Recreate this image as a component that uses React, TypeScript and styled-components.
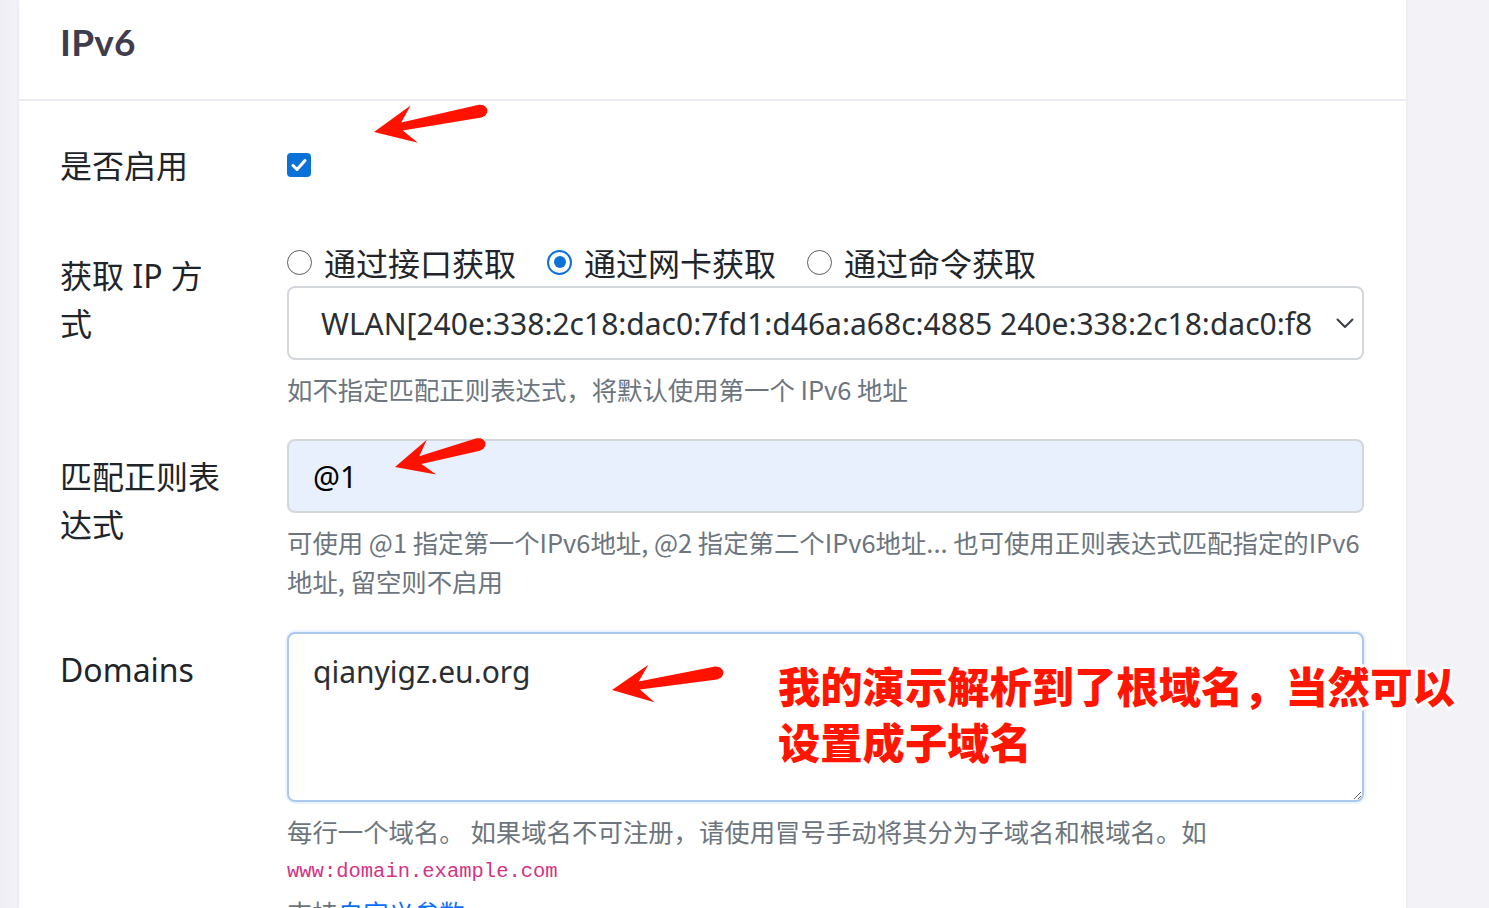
import React from "react";
import styled, { createGlobalStyle } from "styled-components";

const GlobalStyle = createGlobalStyle`
  html, body {
    margin: 0;
    padding: 0;
    background: #f0f0f5;
    overflow: hidden;
  }
  body {
    font-family: "Noto Sans", "Noto Sans CJK SC", sans-serif;
    color: #212529;
  }
`;

const Page = styled.div`
  position: relative;
  width: 1489px;
  height: 908px;
  overflow: hidden;
  background: linear-gradient(90deg, #eeeef4 0px, #f2f2f7 19px);
`;

const Card = styled.div`
  margin-left: 19px;
  width: 1387px;
  min-height: 908px;
  background: #ffffff;
  box-shadow: 0 0 4px rgba(60, 60, 90, 0.06);
`;

const CardHeader = styled.div`
  box-sizing: border-box;
  height: 101px;
  padding-left: 41px;
  display: flex;
  align-items: center;
  border-bottom: 2px solid #ebebf1;
`;

const Title = styled.h1`
  margin: 0 0 16px 0;
  font-family: Lato, "Noto Sans", sans-serif;
  font-weight: 700;
  font-size: 37px;
  color: #3f3d4d;
  letter-spacing: 0.2px;
`;

const CardBody = styled.div`
  padding: 27px 42px 0 41px;
`;

const Row = styled.div<{ $gap?: number }>`
  display: grid;
  grid-template-columns: 227px 1077px;
  margin-bottom: ${(p) => p.$gap ?? 30}px;
`;

const Label = styled.div`
  font-size: 32px;
  line-height: 48px;
  padding-top: 14px;
  max-width: 164px;
  color: #212529;
`;

const Control = styled.div<{ $top?: number }>`
  padding-top: ${(p) => p.$top ?? 0}px;
  display: flex;
  flex-direction: column;
  min-width: 0;
`;

const CheckBox = styled.span`
  width: 24px;
  height: 24px;
  border-radius: 4px;
  background: #0d72d8;
  display: flex;
  align-items: center;
  justify-content: center;
`;

const RadioGroup = styled.div`
  display: flex;
  align-items: center;
  height: 48px;
  gap: 31px;
`;

const RadioItem = styled.label`
  display: flex;
  align-items: center;
  gap: 12px;
  font-size: 32px;
  line-height: 48px;
  color: #212529;
  font-family: "Noto Sans CJK SC", sans-serif;
`;

const RadioDot = styled.span<{ $checked?: boolean }>`
  box-sizing: border-box;
  width: 25px;
  height: 25px;
  border-radius: 50%;
  border: ${(p) => (p.$checked ? "2.5px solid #0d72d8" : "1.5px solid #5c5c5c")};
  background: #fff;
  display: flex;
  align-items: center;
  justify-content: center;
  &::after {
    content: "";
    display: ${(p) => (p.$checked ? "block" : "none")};
    width: 12px;
    height: 12px;
    border-radius: 50%;
    background: #0d72d8;
  }
`;

const Select = styled.div`
  box-sizing: border-box;
  height: 74px;
  border: 2px solid #d3d6db;
  border-radius: 8px;
  display: flex;
  align-items: center;
  padding: 0 8px 0 32px;
  background: #fff;
`;

const SelectText = styled.span`
  flex: 1;
  white-space: nowrap;
  overflow: hidden;
  font-size: 30px;
  color: #2b2f33;
  margin-right: 20px;
`;

const Input = styled.div`
  box-sizing: border-box;
  height: 74px;
  border: 2px solid #d3d6db;
  border-radius: 8px;
  background: #e8f0fe;
  display: flex;
  align-items: center;
  padding: 0 24px;
  font-size: 30px;
  color: #000;
`;

const TextArea = styled.textarea`
  box-sizing: border-box;
  height: 170px;
  width: 100%;
  border: 2px solid #a9c9f0;
  border-radius: 8px;
  box-shadow: 0 0 0 2px rgba(13, 110, 253, 0.08);
  padding: 14px 24px;
  font-family: "Noto Sans", "Noto Sans CJK SC", sans-serif;
  font-size: 30px;
  line-height: 48px;
  color: #2b2f33;
  outline: none;
  resize: vertical;
  margin: 0;
  display: block;
`;

const Help = styled.div<{ $top?: number }>`
  margin-top: ${(p) => p.$top ?? 0}px;
  font-family: "Noto Sans CJK SC", sans-serif;
  font-size: 25.4px;
  line-height: 39px;
  color: #6c757d;
  white-space: nowrap;
`;

const Code = styled.code`
  display: block;
  font-family: "Liberation Mono", "DejaVu Sans Mono", monospace;
  font-size: 20.5px;
  line-height: 42px;
  color: #d63384;
`;

const Link = styled.span`
  color: #0d6efd;
`;

const Note = styled.div`
  position: absolute;
  left: 778px;
  top: 657px;
  font-family: "Noto Sans CJK SC", sans-serif;
  font-weight: 900;
  font-size: 42.3px;
  line-height: 56px;
  color: #ff1500;
  white-space: nowrap;
  -webkit-text-stroke: 5px #ffffff;
  paint-order: stroke fill;
`;

const Overlay = styled.svg`
  position: absolute;
  left: 0;
  top: 0;
  pointer-events: none;
`;

type P = [number, number];

function arrowPoints(tip: P, tail: P, headLen: number, headHalf: number): string {
  const dx = tail[0] - tip[0];
  const dy = tail[1] - tip[1];
  const len = Math.hypot(dx, dy);
  const ux = dx / len;
  const uy = dy / len;
  const nx = -uy;
  const ny = ux;
  const at = (d: number, w: number): P => [tip[0] + ux * d + nx * w, tip[1] + uy * d + ny * w];
  const pts: P[] = [
    tip,
    at(headLen * 1.08, headHalf),
    at(headLen * 0.75, 4),
    at(len - 6, 6.5),
    at(len - 2, 5.5),
    at(len + 0.5, 3),
    at(len + 1.5, 0),
    at(len + 0.5, -3),
    at(len - 2, -5.5),
    at(len - 6, -6.5),
    at(headLen * 0.75, -4),
    at(headLen * 1.08, -headHalf),
  ];
  return pts.map((p) => `${p[0].toFixed(1)},${p[1].toFixed(1)}`).join(" ");
}

const arrows: { tip: P; tail: P; head: number; half: number }[] = [
  { tip: [374, 132], tail: [486, 110], head: 38, half: 19 },
  { tip: [395, 467], tail: [484, 443], head: 35, half: 18 },
  { tip: [612, 690], tail: [722, 672], head: 37, half: 19 },
];

const CheckIcon = () => (
  <svg width="16" height="14" viewBox="0 0 16 14">
    <path d="M2 7.5 L6 11.5 L14 2.5" fill="none" stroke="#fff" strokeWidth="3" strokeLinecap="round" strokeLinejoin="round" />
  </svg>
);

const Chevron = () => (
  <svg width="18" height="11" viewBox="0 0 18 11">
    <path d="M1.5 1.5 L9 9 L16.5 1.5" fill="none" stroke="#3a3f45" strokeWidth="2" strokeLinecap="round" strokeLinejoin="round" />
  </svg>
);

export default function App() {
  return (
    <Page>
      <GlobalStyle />
      <Card>
        <CardHeader>
          <Title>IPv6</Title>
        </CardHeader>
        <CardBody>
          <Row $gap={48}>
            <Label>是否启用</Label>
            <Control $top={25}>
              <CheckBox>
                <CheckIcon />
              </CheckBox>
            </Control>
          </Row>
          <Row $gap={30}>
            <Label>获取 IP 方式</Label>
            <Control>
              <RadioGroup>
                <RadioItem>
                  <RadioDot />
                  通过接口获取
                </RadioItem>
                <RadioItem>
                  <RadioDot $checked />
                  通过网卡获取
                </RadioItem>
                <RadioItem>
                  <RadioDot />
                  通过命令获取
                </RadioItem>
              </RadioGroup>
              <Select>
                <SelectText>WLAN[240e:338:2c18:dac0:7fd1:d46a:a68c:4885 240e:338:2c18:dac0:f8</SelectText>
                <Chevron />
              </Select>
              <Help $top={10}>如不指定匹配正则表达式，将默认使用第一个 IPv6 地址</Help>
            </Control>
          </Row>
          <Row $gap={31}>
            <Label>匹配正则表达式</Label>
            <Control>
              <Input>@1</Input>
              <Help $top={10}>
                可使用 @1 指定第一个IPv6地址, @2 指定第二个IPv6地址... 也可使用正则表达式匹配指定的IPv6
                <br />
                地址, 留空则不启用
              </Help>
            </Control>
          </Row>
          <Row>
            <Label>Domains</Label>
            <Control>
              <TextArea defaultValue="qianyigz.eu.org" spellCheck={false} />
              <Help $top={10}>每行一个域名。 如果域名不可注册，请使用冒号手动将其分为子域名和根域名。如</Help>
              <Code>www:domain.example.com</Code>
              <Help>
                支持<Link>自定义参数</Link>
              </Help>
            </Control>
          </Row>
        </CardBody>
      </Card>
      <Overlay width={1489} height={908} viewBox="0 0 1489 908">
        {arrows.map((a, i) => (
          <polygon key={i} points={arrowPoints(a.tip, a.tail, a.head, a.half)} fill="#ff1200" />
        ))}
      </Overlay>
      <Note>
        我的演示解析到了根域名，当然可以
        <br />
        设置成子域名
      </Note>
    </Page>
  );
}
